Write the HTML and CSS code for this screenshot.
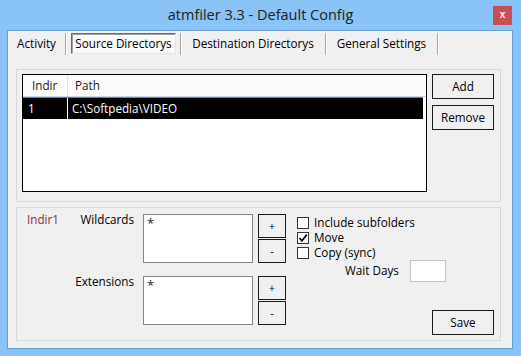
FILE: index.html
```html
<!DOCTYPE html>
<html>
<head>
<meta charset="utf-8">
<title>atmfiler 3.3 - Default Config</title>
<link rel="stylesheet" href="styles.css">
</head>
<body>
<div class="window">
  <div class="titlebar">
    <div></div>
    <div class="title">atmfiler 3.3 - Default Config</div>
    <div class="close">x</div>
  </div>
  <div class="client">
    <div class="tabs">
      <div class="tab t1">Activity</div>
      <div class="tab t2"><div class="sel">Source Directorys</div></div>
      <div class="tab t3">Destination Directorys</div>
      <div class="tab t4">General Settings</div>
    </div>

    <div class="group top">
      <div class="list">
        <div class="lhead">
          <div class="c1">Indir</div>
          <div class="c2">Path</div>
        </div>
        <div class="lrow">
          <div class="c1">1</div>
          <div class="c2">C:\Softpedia\VIDEO</div>
        </div>
      </div>
      <div class="btncol">
        <div class="btn">Add</div>
        <div class="btn">Remove</div>
      </div>
    </div>

    <div class="group bottom">
      <div class="fields">
        <div class="indir">Indir1</div>
        <div class="lbl r1">Wildcards</div>
        <div class="tb r1">*</div>
        <div class="pm r1">
          <div class="pbtn">+</div>
          <div class="pbtn">-</div>
        </div>
        <div class="lbl r2">Extensions</div>
        <div class="tb r2">*</div>
        <div class="pm r2">
          <div class="pbtn">+</div>
          <div class="pbtn">-</div>
        </div>
      </div>
      <div class="opts">
        <div class="chk first"><span class="box"></span><span class="ctext">Include subfolders</span></div>
        <div class="chk"><span class="box"><svg width="10" height="10" viewBox="0 0 10 10"><path d="M1.5 5 L4 7.8 L8.8 1.5" fill="none" stroke="#000" stroke-width="1.7"/></svg></span><span class="ctext">Move</span></div>
        <div class="chk"><span class="box"></span><span class="ctext">Copy (sync)</span></div>
        <div class="wait">
          <span class="wlbl">Wait Days</span>
          <span class="wtb"></span>
        </div>
        <div class="btn save">Save</div>
      </div>
    </div>
  </div>
</div>
</body>
</html>
```

FILE: styles.css
```css
html, body {
  margin: 0;
  padding: 0;
}
body {
  width: 521px;
  height: 356px;
  overflow: hidden;
  font-family: "Open Sans", "Noto Sans", "Liberation Sans", sans-serif;
  font-size: 11.7px;
  color: #000;
}
.window {
  width: 521px;
  height: 356px;
  background: #8ac3f5;
  display: flex;
  flex-direction: column;
}
.titlebar {
  height: 30px;
  flex: none;
  display: grid;
  grid-template-columns: 1fr auto 1fr;
  align-items: start;
}
.title {
  font-size: 14.5px;
  line-height: 29px;
  color: #202020;
  white-space: nowrap;
}
.close {
  justify-self: end;
  margin: 6px 9px 0 0;
  width: 19px;
  height: 19px;
  background: #c75050;
  color: #fff;
  font-family: "Liberation Sans", sans-serif;
  font-weight: bold;
  font-size: 10px;
  line-height: 17px;
  text-align: center;
}
.client {
  flex: 1;
  margin: 0 8px 7px 7px;
  border: 1px solid #6a9fd4;
  background: #f0f0f0;
  display: flex;
  flex-direction: column;
}
.tabs {
  display: flex;
  margin-top: 2px;
  height: 22px;
  flex: none;
}
.tab {
  box-sizing: border-box;
  height: 22px;
  padding-bottom: 3px;
  display: flex;
  align-items: center;
  justify-content: center;
  border-right: 1px solid #a7a7a7;
  box-shadow: 1px 0 0 #ffffff;
  white-space: nowrap;
}
.t1 { width: 58px; }
.t2 { width: 115px; justify-content: flex-start; align-items: flex-start; padding-bottom: 0; }
.t3 { width: 145px; }
.t4 { width: 112px; }
.sel {
  box-sizing: border-box;
  margin-left: 5px;
  width: 105px;
  height: 21px;
  padding-bottom: 2px;
  display: flex;
  align-items: center;
  justify-content: center;
  border: 1px solid;
  border-color: #696969 #e6e6e6 #e6e6e6 #696969;
  box-shadow: inset 1px 1px 0 #a0a0a0;
  background: #f9f9f9;
}
.group {
  box-sizing: border-box;
  border: 1px solid #d8d8d8;
  flex: none;
  display: flex;
}
.group.top {
  margin: 14px 11px 0 8px;
  height: 133px;
  padding: 4px 6px 0 5px;
}
.list {
  box-sizing: border-box;
  width: 405px;
  height: 118px;
  border: 1px solid #000;
  background: #fff;
}
.lhead {
  display: flex;
  height: 21px;
  border-bottom: 1px solid #c6d7ea;
  background: #fcfcfc;
  color: #1a1a1a;
}
.lhead .c1 {
  box-sizing: border-box;
  width: 45px;
  padding: 0 0 2px 9px;
  border-right: 1px solid #e5e5e5;
  display: flex;
  align-items: center;
}
.lhead .c2 {
  padding: 0 0 2px 7px;
  display: flex;
  align-items: center;
}
.lrow {
  display: flex;
  height: 21px;
  margin-right: 3px;
  border-top: 1px solid #7c7c7c;
  background: #000;
  color: #fff;
}
.lrow .c1 {
  box-sizing: border-box;
  width: 45px;
  padding: 0 0 1px 5px;
  border-right: 1px solid #fff;
  display: flex;
  align-items: center;
}
.lrow .c2 {
  padding: 0 0 1px 4px;
  display: flex;
  align-items: center;
}
.btncol {
  margin-left: 5px;
  display: flex;
  flex-direction: column;
  gap: 6px;
}
.btn {
  box-sizing: border-box;
  width: 62px;
  height: 25px;
  padding-bottom: 2px;
  border: 1px solid #1a1a1a;
  background: #f0f0f0;
  display: flex;
  align-items: center;
  justify-content: center;
}
.group.bottom {
  margin: 5px 11px 0 8px;
  height: 134px;
  padding: 6px 6px 5px 10px;
}
.fields {
  display: grid;
  grid-template-columns: 45px 62px 119px 33px;
  grid-template-rows: 49px 49px;
  row-gap: 13px;
  align-content: start;
}
.indir {
  grid-column: 1;
  grid-row: 1;
  line-height: 10px;
  color: #8e2b3c;
}
.lbl {
  grid-column: 2;
  text-align: right;
  line-height: 10px;
  white-space: nowrap;
}
.r1 { grid-row: 1; }
.r2 { grid-row: 2; }
.tb {
  grid-column: 3;
  justify-self: end;
  box-sizing: border-box;
  width: 110px;
  height: 49px;
  border: 1px solid #858585;
  background: #fff;
  padding: 2px 3px 0;
  line-height: 13px;
  font-size: 13px;
  color: #1c2440;
}
.pm {
  grid-column: 4;
  justify-self: end;
  display: flex;
  flex-direction: column;
  gap: 1px;
}
.pbtn {
  box-sizing: border-box;
  width: 28px;
  height: 24px;
  padding-bottom: 2px;
  border: 1px solid #1a1a1a;
  background: #f0f0f0;
  display: flex;
  align-items: center;
  justify-content: center;
  font-size: 11px;
}
.opts {
  flex: 1;
  margin-left: 11px;
  display: flex;
  flex-direction: column;
}
.chk {
  height: 15px;
  display: flex;
  align-items: center;
  white-space: nowrap;
}
.chk.first {
  margin-top: 1px;
}
.ctext {
  padding-bottom: 2px;
}
.box {
  box-sizing: border-box;
  width: 12px;
  height: 12px;
  border: 1px solid #333;
  background: #fff;
  margin-right: 5px;
  display: flex;
  align-items: center;
  justify-content: center;
}
.box svg {
  display: block;
}
.wait {
  height: 22px;
  display: flex;
  align-items: center;
  padding-left: 48px;
}
.wlbl {
  width: 65px;
  padding-bottom: 2px;
  white-space: nowrap;
}
.wtb {
  box-sizing: border-box;
  width: 36px;
  height: 22px;
  border: 1px solid #c3c3c3;
  background: #fff;
}
.save {
  margin-top: auto;
  align-self: flex-end;
}
```
